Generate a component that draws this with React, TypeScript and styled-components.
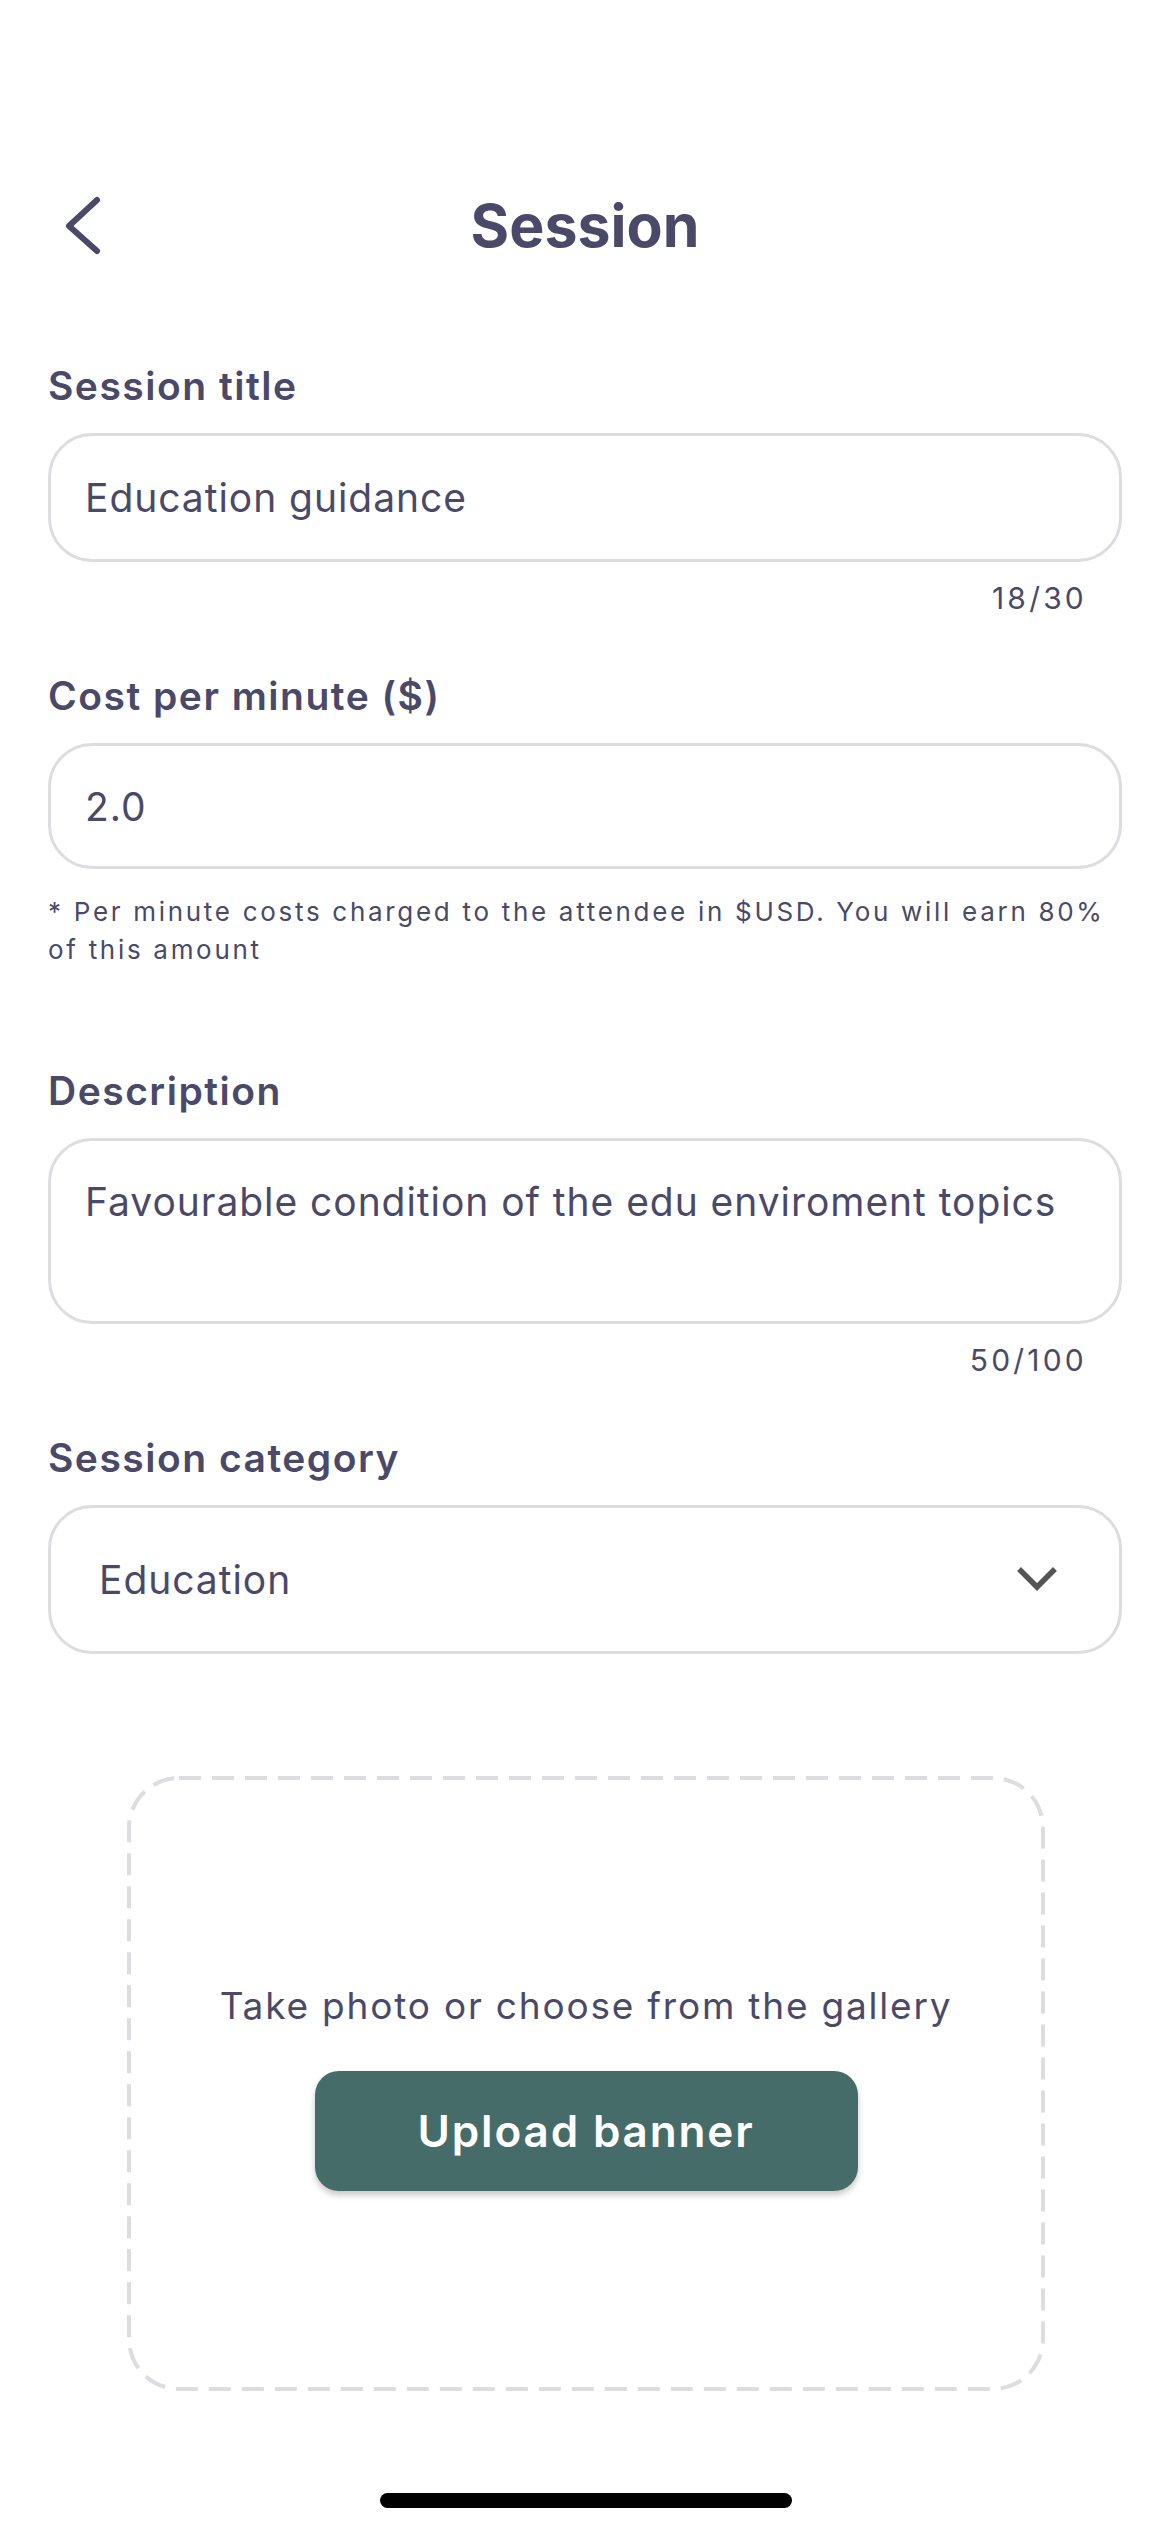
import React from "react";
import styled, { createGlobalStyle } from "styled-components";

const Global = createGlobalStyle`
  html, body {
    margin: 0;
    padding: 0;
    background: #ffffff;
  }
  body {
    font-family: Inter, "Noto Sans", "Liberation Sans", sans-serif;
    color: #4a4a68;
    -webkit-font-smoothing: antialiased;
  }
`;

const Page = styled.div`
  width: 1170px;
  min-height: 2532px;
  box-sizing: border-box;
  padding: 190px 48px 0;
  display: flex;
  flex-direction: column;
`;

const Header = styled.header`
  display: grid;
  grid-template-columns: 1fr auto 1fr;
  align-items: center;
  height: 72px;
`;

const BackButton = styled.button`
  justify-self: start;
  display: flex;
  align-items: center;
  background: none;
  border: none;
  padding: 0;
  margin-left: 15px;
  margin-top: 0;
  cursor: pointer;
`;

const Title = styled.h1`
  margin: 0;
  font-size: 59px;
  line-height: 72px;
  font-weight: 700;
  color: #4a4a68;
  letter-spacing: 0;
`;

const Form = styled.form`
  display: flex;
  flex-direction: column;
  margin-top: 100px;
`;

const Field = styled.div<{ $gapAfter?: number }>`
  display: flex;
  flex-direction: column;
  margin-bottom: ${(p) => p.$gapAfter ?? 0}px;
`;

const Label = styled.label`
  font-size: 39px;
  line-height: 47px;
  font-weight: 600;
  color: #4a4a68;
  letter-spacing: 1.5px;
  margin-bottom: 24px;
`;

const InputBox = styled.div<{ $height: number; $padLeft?: number; $align?: string }>`
  box-sizing: border-box;
  height: ${(p) => p.$height}px;
  border: 3px solid #dcdce1;
  border-radius: 44px;
  display: flex;
  align-items: ${(p) => p.$align ?? "center"};
  justify-content: space-between;
  padding: 0 60px 0 ${(p) => p.$padLeft ?? 34}px;
`;

const AreaBox = styled(InputBox)`
  padding-top: 37px;
`;

const Value = styled.span`
  font-size: 39px;
  line-height: 47px;
  font-weight: 400;
  color: #4a4a68;
  letter-spacing: 0.95px;
`;

const Counter = styled.div`
  align-self: flex-end;
  margin-top: 19px;
  margin-right: 35px;
  font-size: 30px;
  line-height: 34px;
  color: #4a4a68;
  letter-spacing: 3.2px;
`;

const Helper = styled.p`
  margin: 24px 0 0;
  font-size: 26px;
  line-height: 38px;
  color: #4a4a68;
  letter-spacing: 2.7px;
`;

const Chevron = styled.svg`
  flex: none;
  margin-right: 2px;
`;

const UploadArea = styled.div`
  position: relative;
  align-self: center;
  box-sizing: border-box;
  width: 918px;
  height: 615px;
  margin-top: 122px;
  margin-left: 2px;
  display: flex;
  flex-direction: column;
  align-items: center;
  justify-content: center;
  gap: 43px;
  padding-top: 8px;
`;

const DashedFrame = styled.svg`
  position: absolute;
  inset: 0;
  width: 100%;
  height: 100%;
  pointer-events: none;
`;

const UploadHint = styled.p`
  margin: 0;
  font-size: 37px;
  line-height: 44px;
  color: #4a4a68;
  letter-spacing: 1.8px;
`;

const UploadButton = styled.button`
  width: 543px;
  height: 120px;
  border: none;
  border-radius: 24px;
  background: #466c6a;
  color: #ffffff;
  font-family: Inter, "Noto Sans", "Liberation Sans", sans-serif;
  font-size: 44px;
  font-weight: 600;
  letter-spacing: 1.85px;
  box-shadow: 0 4px 6px rgba(0, 0, 0, 0.22);
  cursor: pointer;
`;

const HomeIndicator = styled.div`
  align-self: center;
  width: 412px;
  height: 15px;
  border-radius: 8px;
  background: #000000;
  margin-top: 102px;
  margin-left: 2px;
`;

export default function App() {
  return (
    <>
      <Global />
      <Page>
        <Header>
          <BackButton type="button" aria-label="Back">
            <svg width="40" height="60" viewBox="0 0 40 60">
              <path
                d="M34 4 L6 30 L34 55"
                fill="none"
                stroke="#4a4a68"
                strokeWidth="6"
                strokeLinecap="round"
                strokeLinejoin="round"
              />
            </svg>
          </BackButton>
          <Title>Session</Title>
          <span />
        </Header>

        <Form onSubmit={(e) => e.preventDefault()}>
          <Field $gapAfter={57}>
            <Label>Session title</Label>
            <InputBox $height={129}>
              <Value>Education guidance</Value>
            </InputBox>
            <Counter>18/30</Counter>
          </Field>

          <Field $gapAfter={98}>
            <Label>Cost per minute ($)</Label>
            <InputBox $height={126}>
              <Value>2.0</Value>
            </InputBox>
            <Helper>
              * Per minute costs charged to the attendee in $USD. You will earn 80% of this amount
            </Helper>
          </Field>

          <Field $gapAfter={57}>
            <Label>Description</Label>
            <AreaBox $height={186} $align="flex-start">
              <Value>Favourable condition of the edu enviroment topics</Value>
            </AreaBox>
            <Counter>50/100</Counter>
          </Field>

          <Field>
            <Label>Session category</Label>
            <InputBox $height={149} $padLeft={48}>
              <Value>Education</Value>
              <Chevron width="40" height="28" viewBox="0 0 40 28">
                <path
                  d="M4 5 L20 21 L36 5"
                  fill="none"
                  stroke="#555555"
                  strokeWidth="5.5"
                  strokeLinecap="square"
                />
              </Chevron>
            </InputBox>
          </Field>
        </Form>

        <UploadArea>
          <DashedFrame viewBox="0 0 918 615" preserveAspectRatio="none">
            <rect
              x="2"
              y="2"
              width="914"
              height="611"
              rx="50"
              ry="50"
              fill="none"
              stroke="#dcdce1"
              strokeWidth="4"
              strokeDasharray="22 11"
            />
          </DashedFrame>
          <UploadHint>Take photo or choose from the gallery</UploadHint>
          <UploadButton type="button">Upload banner</UploadButton>
        </UploadArea>

        <HomeIndicator />
      </Page>
    </>
  );
}
